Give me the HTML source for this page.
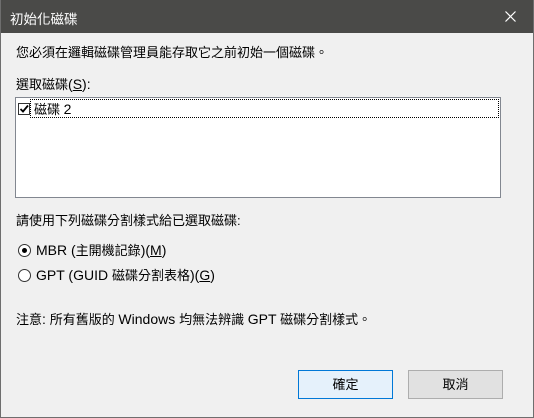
<!DOCTYPE html>
<html><head><meta charset="utf-8"><style>
*{margin:0;padding:0;box-sizing:border-box}
body{width:534px;height:418px;overflow:hidden;background:#f0f0f0;font-family:"Liberation Sans","Noto Sans CJK TC",sans-serif;font-size:13px;color:#000;position:relative}
.frame{position:absolute;left:0;top:0;width:534px;height:418px;border:1px solid #6e6e6e;border-top:none}
.title{position:absolute;left:0;top:0;width:534px;height:33px;background:#4a4a48;color:#fff;font-size:13.5px}
.title span{position:absolute;left:10px;top:8px}
.t{position:absolute;white-space:nowrap;line-height:16px}
.l{font-size:14px}
.list{position:absolute;left:15px;top:97px;width:486px;height:101px;background:#fff;border:1px solid #828790}
.sel{position:absolute;left:14px;top:1px;width:469px;height:19px;border:1px dotted #000}
.cb{position:absolute;left:2px;top:5px;width:12px;height:12px;border:1px solid #333;background:#fff}
.radio{position:absolute;width:13px;height:13px;border:1px solid #333;border-radius:50%;background:#fff}
.radio.on::after{content:"";position:absolute;left:3px;top:3px;width:5px;height:5px;border-radius:50%;background:#000}
.btn{position:absolute;top:370px;height:29px;width:95px;text-align:center;line-height:27px}
u{text-decoration:underline}
</style></head><body>
<div class="title"><span>初始化磁碟</span>
<svg style="position:absolute;left:505px;top:11px" width="11" height="11"><path d="M0.5 0.5L10.5 10.5M10.5 0.5L0.5 10.5" stroke="#fff" stroke-width="1.2"/></svg></div>
<div class="frame"></div>
<div class="t" style="left:16px;top:45px">您必須在邏輯磁碟管理員能存取它之前初始一個磁碟。</div>
<div class="t" style="left:16px;top:76px">選取磁碟<span class="l">(<u>S</u>):</span></div>
<div class="list">
<div class="cb"><svg width="10" height="10" style="position:absolute;left:0;top:0"><path d="M1.5 5L4 7.5L9 1.5" stroke="#000" stroke-width="1.8" fill="none"/></svg></div>
<div class="sel"></div>
<div class="t" style="left:18px;top:3px">磁碟 <span class="l">2</span></div>
</div>
<div class="t" style="left:16px;top:213px">請使用下列磁碟分割樣式給已選取磁碟:</div>
<div class="radio on" style="left:18px;top:244px"></div>
<div class="t" style="left:36px;top:242px"><span class="l">MBR (</span>主開機記錄<span class="l">)(<u>M</u>)</span></div>
<div class="radio" style="left:18px;top:269px"></div>
<div class="t" style="left:36px;top:267px"><span class="l">GPT (GUID </span>磁碟分割表格<span class="l">)(<u>G</u>)</span></div>
<div class="t" style="left:16px;top:311px">注意<span class="l">: </span>所有舊版的 <span class="l">Windows </span>均無法辨識 <span class="l">GPT </span>磁碟分割樣式。</div>
<div class="btn" style="left:298px;background:#e5f1fb;border:1px solid #0078d7">確定</div>
<div class="btn" style="left:408px;background:#e1e1e1;border:1px solid #adadad">取消</div>
</body></html>
